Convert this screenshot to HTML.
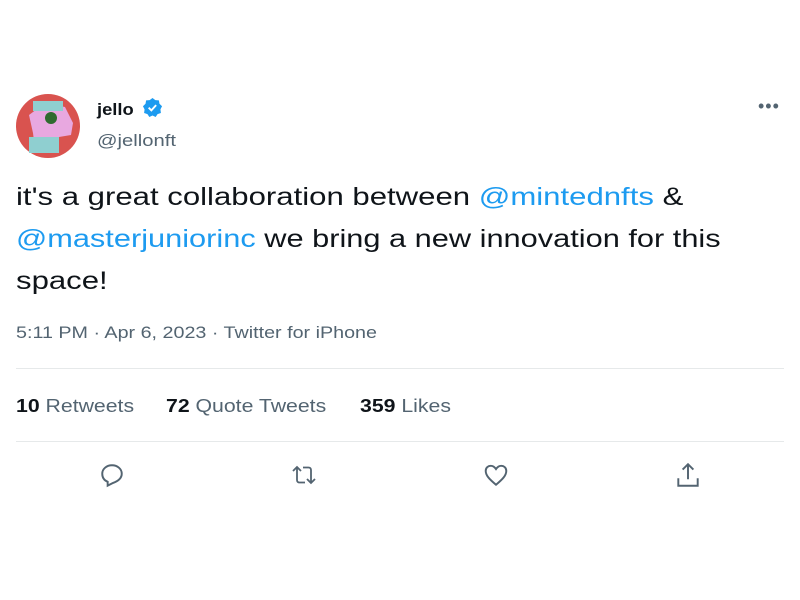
<!DOCTYPE html>
<html><head><style>
body{margin:0;width:800px;height:600px;background:#fff;font-family:"Liberation Sans",sans-serif;position:relative;overflow:hidden}
.a{position:absolute;white-space:nowrap;transform-origin:0 0}
.t{font-size:25px;color:#0f1419;left:16px}
.t span{color:#1d9bf0}
.hr{position:absolute;left:16px;width:768px;height:1px;background:#e6e9ea}
.s{font-size:18px;color:#536471;top:396px;transform:scaleX(1.18)}
.s b{color:#0f1419;font-weight:bold}
</style></head><body>
<svg class="a" style="left:15px;top:93px" width="66" height="66" viewBox="0 0 66 66">
<circle cx="33" cy="33" r="32" fill="#d9534f"/>
<path d="M14 22 L30 10 L50 14 L58 30 L56 42 L44 44 L40 54 L20 56 L18 40 Z" fill="#e8a8e0"/>
<rect x="18" y="8" width="30" height="10" fill="#8fcfd0"/>
<circle cx="36" cy="25" r="6" fill="#2f6b2f"/>
<rect x="14" y="44" width="30" height="16" fill="#8fcfd0"/>
</svg>
<div class="a" style="left:97px;top:100px;font-size:17px;font-weight:bold;color:#0f1419;transform:scaleX(1.08)">jello</div>
<svg class="a" style="left:142px;top:97px" width="21" height="21" viewBox="0 0 22 22"><path d="M11 1l3 2.3 3.7.2.6 3.6 2.7 2.6-1.7 3.3.5 3.7-3.5 1.2-2 3.1-3.3-1.6-3.3 1.6-2-3.1-3.5-1.2.5-3.7L1 9.7l2.7-2.6.6-3.6L8 3.3z" fill="#1d9bf0"/><path d="M7 11.2l2.8 2.8 5-5.5" stroke="#fff" stroke-width="2" fill="none"/></svg>
<div class="a" style="left:97px;top:131px;font-size:17px;color:#536471;transform:scaleX(1.19)">@jellonft</div>
<div class="a" style="left:758px;top:96px;font-size:18px;color:#536471;letter-spacing:1px">•••</div>
<div class="a t" style="top:183px;transform:scaleX(1.245)">it's a great collaboration between <span>@mintednfts</span> &amp;</div>
<div class="a t" style="top:225px;transform:scaleX(1.23)"><span>@masterjuniorinc</span> we bring a new innovation for this</div>
<div class="a t" style="top:267px;transform:scaleX(1.245)">space!</div>
<div class="a" style="left:16px;top:323px;font-size:17px;color:#536471;transform:scaleX(1.16)">5:11 PM · Apr 6, 2023 · Twitter for iPhone</div>
<div class="hr" style="top:368px"></div>
<div class="a s" style="left:16px"><b>10</b> Retweets</div>
<div class="a s" style="left:166px"><b>72</b> Quote Tweets</div>
<div class="a s" style="left:360px"><b>359</b> Likes</div>
<div class="hr" style="top:441px"></div>
<svg class="a" style="left:99px;top:462px" width="26" height="26" viewBox="0 0 24 24" fill="none" stroke="#536471" stroke-width="1.8"><path d="M12 3c5 0 9 3.4 9 7.8 0 4.5-4 7-8 8.5l-5 2.5v-3.5C5 17 3 14.3 3 10.8 3 6.4 7 3 12 3z"/></svg>
<svg class="a" style="left:290px;top:462px" width="28" height="26" viewBox="0 0 28 24" fill="none" stroke="#536471" stroke-width="1.8"><path d="M3 8l4-4 4 4M7 4v13c0 1.5 1 2.5 2.5 2.5H15M25 16l-4 4-4-4M21 20V7c0-1.5-1-2.5-2.5-2.5H13"/></svg>
<svg class="a" style="left:483px;top:462px" width="26" height="26" viewBox="0 0 24 24" fill="none" stroke="#536471" stroke-width="1.8"><path d="M12 21C6 16 2.5 12.5 2.5 8.2 2.5 5.5 4.6 3.5 7.2 3.5c2 0 3.6 1.2 4.8 3 1.2-1.8 2.8-3 4.8-3 2.6 0 4.7 2 4.7 4.7C21.5 12.5 18 16 12 21z"/></svg>
<svg class="a" style="left:675px;top:461px" width="26" height="28" viewBox="0 0 24 26" fill="none" stroke="#536471" stroke-width="1.8"><path d="M12 3v14M7 8l5-5 5 5M3 16v7h18v-7"/></svg>
</body></html>
